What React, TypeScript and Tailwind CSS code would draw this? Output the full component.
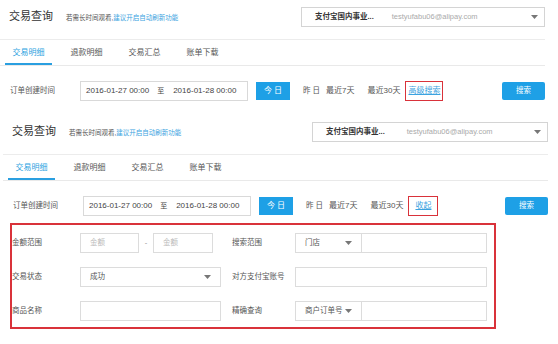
const font = { fontFamily: '"Liberation Sans", "Noto Sans CJK SC", sans-serif' };

function Caret() {
  return (
    <svg width="7" height="4" viewBox="0 0 7 4" className="shrink-0">
      <path d="M0 0h7L3.5 4z" fill="#777" />
    </svg>
  );
}

function Tabs() {
  const tabs = ['交易明细', '退款明细', '交易汇总', '账单下载'];
  return (
    <div className="flex h-[26px] border-b border-[#e9e9e9] pl-[5px] gap-[11px]">
      {tabs.map((t, i) => (
        <div
          key={t}
          className={`w-[47px] flex items-center justify-center text-[8px] pt-[2px] border-b-2 ${
            i === 0 ? 'border-[#2a9fe0] text-[#2a9fe0]' : 'border-transparent text-[#555]'
          }`}
        >
          {t}
        </div>
      ))}
    </div>
  );
}

function Header({ boxW, boxGap }: { boxW: number; boxGap: number }) {
  return (
    <div className="flex h-[40px] items-center justify-between pl-[9px] pb-[6px] border-b border-[#ececec]">
      <div className="flex items-center">
        <span className="text-[11px] text-[#333]">交易查询</span>
        <span className="ml-[13px] text-[6.5px] text-[#555] mt-[2px]">
          若需长时间观看,<span className="text-[#3ba3e0]">建议开启自动刷新功能</span>
        </span>
      </div>
      <div
        className="h-[20px] border border-[#d4d4d4] flex items-center pl-[13px] pr-[6px]"
        style={{ width: boxW }}
      >
        <span className="text-[7.5px] font-bold text-[#333]">支付宝国内事业...</span>
        <span className="text-[7.5px] text-[#aaa]" style={{ marginLeft: boxGap }}>
          testyufabu06@alipay.com
        </span>
        <span className="ml-auto">
          <Caret />
        </span>
      </div>
    </div>
  );
}

function FilterRow({ link, pad }: { link: string; pad: number }) {
  return (
    <div className="flex items-center pt-[15px] pl-[10px]">
      <span className="w-[70px] text-[7.5px] text-[#555]">订单创建时间</span>
      <div className="w-[168px] h-[20px] border border-[#d9d9d9] flex items-center pl-[5px] text-[8px] text-[#444]">
        <span>2016-01-27 00:00</span>
        <span className="ml-[8px] text-[7px]">至</span>
        <span className="ml-[9px]">2016-01-28 00:00</span>
      </div>
      <div className="ml-[8px] w-[34px] h-[18px] bg-[#1ea0e6] text-white text-[8px] flex items-center justify-center">
        今 日
      </div>
      <span className="ml-[13px] text-[7.5px] text-[#555]">昨 日</span>
      <span className="ml-[6px] text-[8px] text-[#555]">最近7天</span>
      <span className="ml-[13px] text-[8px] text-[#555]">最近30天</span>
      <span
        className="ml-[5px] h-[20px] flex items-center border-[1.5px] border-[#d9323a] text-[8px] text-[#3ba3e0] underline"
        style={{ paddingLeft: pad, paddingRight: pad }}
      >
        {link}
      </span>
      <div className="ml-auto w-[43px] h-[18px] bg-[#1ea0e6] rounded-[2px] text-white text-[7.5px] flex items-center justify-center">
        搜索
      </div>
    </div>
  );
}

function Input({ w, text, caret, ph }: { w: number; text?: string; caret?: boolean; ph?: boolean }) {
  return (
    <div
      className="h-[20px] border border-[#dcdcdc] flex items-center px-[9px] text-[7.5px]"
      style={{ width: w, color: ph ? '#bbb' : '#555' }}
    >
      {text && <span>{text}</span>}
      {caret && (
        <span className="ml-auto">
          <Caret />
        </span>
      )}
    </div>
  );
}

function Advanced() {
  return (
    <div className="mt-[7px] ml-[7px] w-[486px] border-2 border-[#d9323a] pt-[8px] pb-[6px] flex flex-col gap-[14px] text-[7.5px] text-[#555]">
      <div className="flex items-center">
        <span className="w-[68px]">金额范围</span>
        <Input w={59} text="金额" ph />
        <span className="w-[14px] text-center text-[#999]">-</span>
        <Input w={60} text="金额" ph />
        <span className="ml-[19px] w-[63px]">搜索范围</span>
        <Input w={67} text="门店" caret />
        <div className="-ml-px">
          <Input w={126} />
        </div>
      </div>
      <div className="flex items-center">
        <span className="w-[68px]">交易状态</span>
        <Input w={141} text="成功" caret />
        <span className="ml-[11px] w-[63px]">对方支付宝账号</span>
        <Input w={192} />
      </div>
      <div className="flex items-center">
        <span className="w-[68px]">商品名称</span>
        <Input w={141} />
        <span className="ml-[11px] w-[63px]">精确查询</span>
        <Input w={67} text="商户订单号" caret />
        <div className="-ml-px">
          <Input w={126} />
        </div>
      </div>
    </div>
  );
}

export default function App() {
  return (
    <div className="w-[558px] h-[344px] bg-white overflow-hidden" style={font}>
      <div className="w-[545px] h-[115px]">
        <Header boxW={244} boxGap={18} />
        <Tabs />
        <FilterRow link="高级搜索" pad={2} />
      </div>
      <div className="w-[545px] ml-[3px]">
        <Header boxW={236} boxGap={22} />
        <Tabs />
        <FilterRow link="收起" pad={6} />
        <Advanced />
      </div>
    </div>
  );
}
